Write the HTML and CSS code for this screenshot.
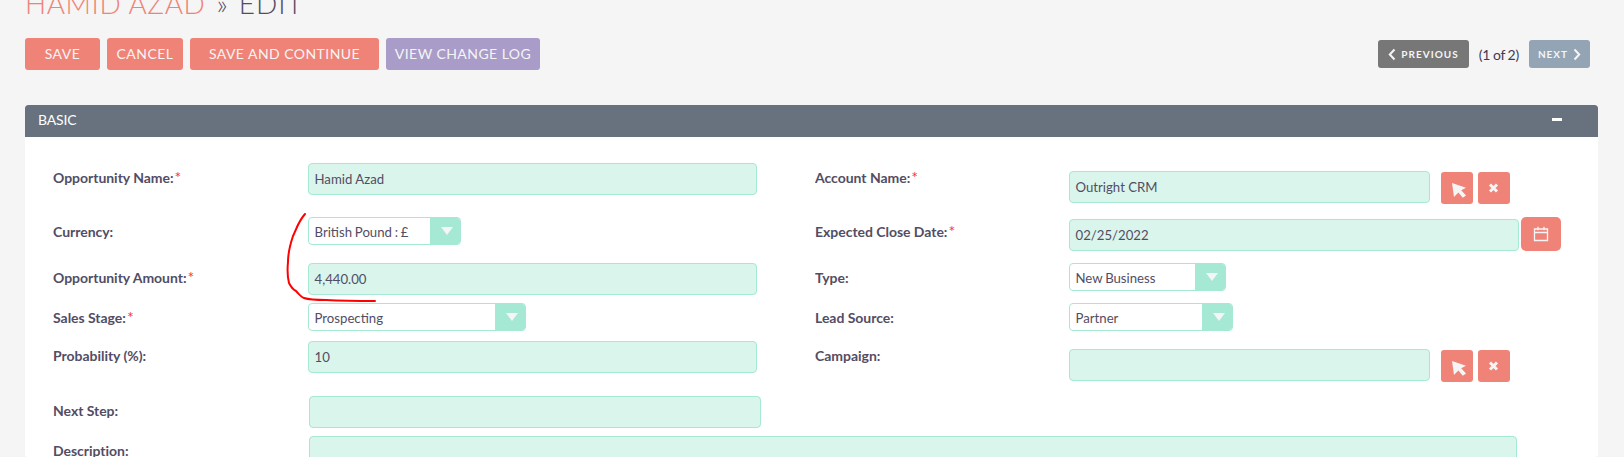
FILE: index.html
```html
<!DOCTYPE html>
<html lang="en">
<head>
<meta charset="utf-8">
<title>Hamid Azad » Edit</title>
<link rel="stylesheet" href="styles.css">
</head>
<body>
<main class="page">
  <h1 class="title"><span class="title-name">Hamid Azad</span> <span class="title-sep">»</span> <span class="title-action">Edit</span></h1>
  <div class="toolbar">
    <div class="actions">
      <button class="btn btn-save">Save</button>
      <button class="btn btn-cancel">Cancel</button>
      <button class="btn btn-continue">Save and Continue</button>
      <button class="btn btn-log">View Change Log</button>
    </div>
    <div class="pager">
      <button class="pager-btn pager-prev"><svg class="chev" viewBox="0 0 8 12"><path d="M6.5 1 1.8 6l4.7 5"/></svg>Previous</button>
      <span class="pager-count">(1 of 2)</span>
      <button class="pager-btn pager-next">Next<svg class="chev" viewBox="0 0 8 12"><path d="M1.5 1 6.2 6l-4.7 5"/></svg></button>
    </div>
  </div>
  <section class="panel">
    <header class="panel-head"><span>BASIC</span><span class="collapse"></span></header>
    <div class="panel-body">
      <div class="row row-1">
        <div class="label">Opportunity Name:<i>*</i></div>
        <div class="cell"><div class="input input-left">Hamid Azad</div></div>
        <div class="label">Account Name:<i>*</i></div>
        <div class="cell cell-low">
          <div class="input input-rel">Outright CRM</div>
          <button class="icon-btn icon-first"><svg viewBox="0 0 32 32"><path d="M11 11 25 15.8 20.2 18.2 25 23.4 21.8 25.8 17.4 20.4 13 25Z"/></svg></button>
          <button class="icon-btn"><svg viewBox="0 0 32 32"><path class="x" d="M12 12.5l7 7M19 12.5l-7 7"/></svg></button>
        </div>
      </div>
      <div class="row row-2">
        <div class="label">Currency:</div>
        <div class="cell"><div class="select sel-currency"><span>British Pound : £</span><b class="arrow"></b></div></div>
        <div class="label">Expected Close Date:<i>*</i></div>
        <div class="cell cell-date">
          <div class="input input-date">02/25/2022</div>
          <button class="cal-btn"><svg viewBox="0 0 16 16"><path d="M1.5 3h13v11.5h-13zM1.5 6.5h13M5 .8v3.4M11 .8v3.4"/></svg></button>
        </div>
      </div>
      <div class="row row-3">
        <div class="label">Opportunity Amount:<i>*</i></div>
        <div class="cell"><div class="input input-left">4,440.00</div></div>
        <div class="label">Type:</div>
        <div class="cell"><div class="select sel-type"><span>New Business</span><b class="arrow"></b></div></div>
      </div>
      <div class="row row-4">
        <div class="label">Sales Stage:<i>*</i></div>
        <div class="cell"><div class="select sel-stage"><span>Prospecting</span><b class="arrow"></b></div></div>
        <div class="label">Lead Source:</div>
        <div class="cell"><div class="select sel-lead"><span>Partner</span><b class="arrow"></b></div></div>
      </div>
      <div class="row row-5">
        <div class="label">Probability (%):</div>
        <div class="cell"><div class="input input-left">10</div></div>
        <div class="label">Campaign:</div>
        <div class="cell cell-low">
          <div class="input input-rel"></div>
          <button class="icon-btn icon-first"><svg viewBox="0 0 32 32"><path d="M11 11 25 15.8 20.2 18.2 25 23.4 21.8 25.8 17.4 20.4 13 25Z"/></svg></button>
          <button class="icon-btn"><svg viewBox="0 0 32 32"><path class="x" d="M12 12.5l7 7M19 12.5l-7 7"/></svg></button>
        </div>
      </div>
      <div class="row row-6">
        <div class="label">Next Step:</div>
        <div class="cell"><div class="input input-next"></div></div>
      </div>
      <div class="row row-7">
        <div class="label">Description:</div>
        <div class="input input-desc"></div>
      </div>
    </div>
  </section>
</main>
<svg class="scribble" viewBox="0 0 1624 457" aria-hidden="true"><path d="M305 214C298 222 296 230 293 236 290 245 288 255 288 262 287 272 288 279 289 283 291 287 294 290 296 291 299 294 301 297 304 298 310 300 318 300 326 300 345 301 360 301 375 301"/></svg>
</body>
</html>
```
FILE: styles.css
```css
* { box-sizing: border-box; }
html, body { margin: 0; height: 457px; overflow: hidden; }
body { background: #f5f5f5; font-family: Lato, "Liberation Sans", sans-serif; color: #534d64; position: relative; }
.page { padding: 0 26px 0 25px; }
.title { margin: -14px 0 0; height: 52px; font-size: 28px; line-height: 34px; font-weight: 300; text-transform: uppercase; letter-spacing: 1px; white-space: nowrap; }
.title-name { color: #f08377; letter-spacing: .55px; }
.title-sep { color: #534d64; margin: 0 1.5px 0 2.5px; }
.title-action { color: #534d64; }
.toolbar { display: flex; justify-content: space-between; align-items: flex-start; height: 67px; margin-right: 8px; }
.actions { display: flex; gap: 7px; }
.btn { height: 32px; border: 0; border-radius: 3px; padding: 0 0 1px; font: 400 14px Lato, sans-serif; letter-spacing: .45px; text-transform: uppercase; color: #f5f5f5; background: #f08377; }
.btn-save { width: 75px; }
.btn-cancel { width: 76px; }
.btn-continue { width: 189px; }
.btn-log { width: 154px; background: #a99cc9; }
.pager { display: flex; align-items: center; height: 28px; margin-top: 2px; }
.pager-btn { display: flex; align-items: center; justify-content: center; gap: 5px; height: 28px; border: 0; border-radius: 3px; padding: 0; font: 700 10px Lato, sans-serif; letter-spacing: 1px; text-transform: uppercase; color: #f5f5f5; }
.pager-prev { width: 91px; background: #777; }
.pager-next { width: 61px; background: #93a4b5; }
.chev { width: 8px; height: 13px; fill: none; stroke: #f5f5f5; stroke-width: 2; }
.pager-count { width: 60px; text-align: center; font-size: 14px; letter-spacing: -.1px; word-spacing: -1px; color: #3f3a55; }
.panel { border-radius: 3px; overflow: hidden; }
.panel-head { display: flex; justify-content: space-between; align-items: center; height: 32px; padding: 0 36px 4px 13px; background: #67727e; color: #fff; font-size: 14px; letter-spacing: -.15px; border-radius: 3px 3px 0 0; }
.collapse { width: 10px; height: 3px; background: #fff; }
.panel-body { background: #fff; padding: 26px 0 0 28px; height: 320px; }
.row { display: grid; grid-template-columns: 255px 507px 254px 1fr; }
.row-1 { height: 54px; }
.row-2 { height: 46px; }
.row-3 { height: 40px; }
.row-4 { height: 38px; }
.row-5 { height: 55px; }
.row-6 { height: 40px; }
.row-6, .row-7 { grid-template-columns: 256px 1fr; }
.label { padding-top: 5px; font-size: 14px; line-height: 20px; font-weight: 700; color: #534d64; white-space: nowrap; letter-spacing: -.03px; }
.label i { font-style: normal; font-weight: 400; font-size: 16px; line-height: 16px; margin-left: 1px; color: #f03a3a; }
.cell { display: flex; align-items: flex-start; }
.cell-low { padding-top: 8px; }
.cell-date { padding-top: 2px; }
.input { height: 32px; padding: 0 5.5px; line-height: 30px; font-size: 13.2px; color: #534d64; background: #d9f5ec; border: 1px solid #a5e8d4; border-radius: 4px; }
.input-left { width: 449px; }
.input-rel { width: 361px; }
.input-date { width: 450px; }
.input-next { width: 452px; }
.input-desc { width: 1208px; height: 60px; }
.select { display: flex; justify-content: space-between; height: 28px; line-height: 28px; padding-left: 5.5px; font-size: 13.2px; word-spacing: -.6px; color: #534d64; background: #fff; border: 1px solid #a5e8d4; border-radius: 4px; overflow: hidden; }
.arrow { display: flex; align-items: center; justify-content: center; width: 30px; height: 100%; padding-left: 3px; background: #a5e8d4; }
.arrow::after { content: ""; border: 6px solid transparent; border-top: 8px solid #f5f5f5; border-bottom: 0; }
.sel-currency { width: 153px; }
.sel-type { width: 157px; }
.sel-stage { width: 218px; }
.sel-lead { width: 164px; }
.icon-btn { width: 32px; height: 32px; margin: 1px 0 0 5px; padding: 0; border: 0; border-radius: 3px; background: #f08377; }
.icon-first { margin-left: 11px; }
.icon-btn svg { display: block; width: 32px; height: 32px; fill: #f5f5f5; }
.icon-btn .x { fill: none; stroke: #f5f5f5; stroke-width: 3; }
.cal-btn { width: 40px; height: 34px; margin: -2px 0 0 2px; padding: 7px 12px; border: 0; border-radius: 5px; background: #f08377; }
.cal-btn svg { display: block; width: 16px; height: 16px; fill: none; stroke: #f5f5f5; stroke-width: 1.3; }
.scribble { position: absolute; left: 0; top: 0; width: 1624px; height: 457px; pointer-events: none; }
.scribble path { fill: none; stroke: #f00; stroke-width: 2; stroke-linecap: round; }
```
